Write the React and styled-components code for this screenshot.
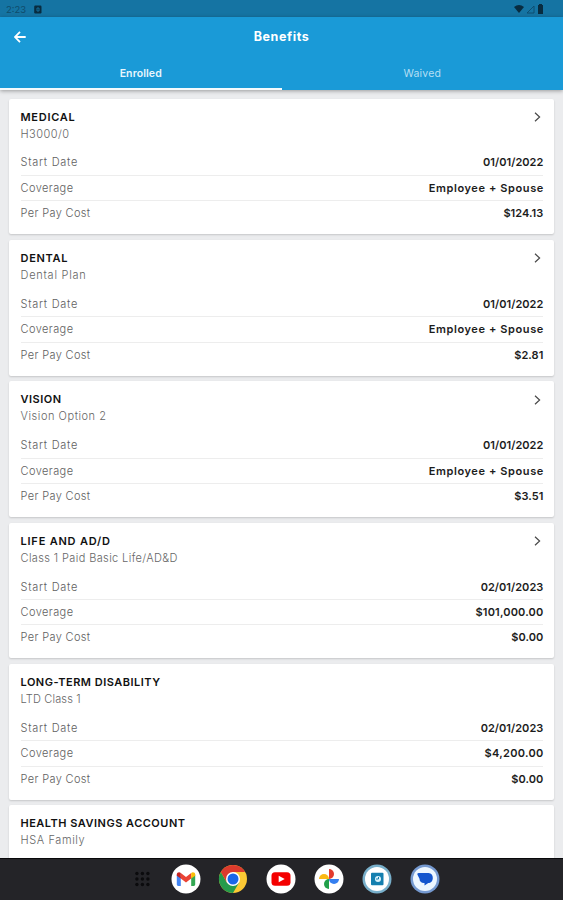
import React from "react";
import styled, { createGlobalStyle } from "styled-components";

const Global = createGlobalStyle`
  * { box-sizing: border-box; }
  body { margin: 0; background: #ebecee; font-family: Inter, "Open Sans", sans-serif; }
`;

const Screen = styled.div`
  height: 900px;
  display: flex;
  flex-direction: column;
  overflow: hidden;
  background: #ebecee;
`;

const StatusBar = styled.div`
  flex: none;
  height: 17px;
  background: #1574a3;
  display: flex;
  align-items: center;
  justify-content: space-between;
  padding: 1px 19px 0 6px;
  color: #0f4c6b;
  font-size: 9.5px;
  line-height: 17px;
`;

const StatusGroup = styled.div`
  display: flex;
  align-items: center;
  gap: ${(p) => p.$gap}px;
`;

const Header = styled.header`
  flex: none;
  height: 73.3px;
  background: #1a9ad7;
  color: #fff;
  box-shadow: 0 1px 4px rgba(0, 0, 0, 0.35);
  position: relative;
`;

const AppBar = styled.div`
  height: 40px;
  display: grid;
  grid-template-columns: 40px 1fr 40px;
  align-items: center;
`;

const BackButton = styled.button`
  border: 0;
  padding: 0;
  background: none;
  display: flex;
  justify-content: center;
`;

const PageTitle = styled.h1`
  margin: 0;
  text-align: center;
  font-size: 12.5px;
  font-weight: 700;
  line-height: 20px;
  letter-spacing: 0.6px;
`;

const Tabs = styled.div`
  height: 33.3px;
  display: grid;
  grid-template-columns: 1fr 1fr;
`;

const Tab = styled.div`
  height: 33.3px;
  text-align: center;
  font-size: 10.5px;
  line-height: 33px;
  letter-spacing: ${(p) => (p.$active ? 0.1 : 0.2)}px;
  font-weight: ${(p) => (p.$active ? 600 : 400)};
  color: ${(p) => (p.$active ? "#e9f6fd" : "#b5dff4")};
  border-bottom: 2px solid ${(p) => (p.$active ? "#f4fafd" : "transparent")};
`;

const List = styled.main`
  flex: 1;
  min-height: 0;
  overflow: hidden;
  padding: 8.3px 8.7px 0 9px;
  display: flex;
  flex-direction: column;
  gap: 5.75px;
`;

const Card = styled.section`
  flex: none;
  height: 135.6px;
  padding: 10px 11px 0 11.5px;
  background: #fff;
  border-radius: 2px;
  box-shadow: 0 1px 2px rgba(0, 0, 0, 0.16);
`;

const CardHead = styled.div`
  height: 41.9px;
  display: flex;
  justify-content: space-between;
`;

const CardTitle = styled.h2`
  margin: 0;
  font-size: 11px;
  line-height: 17px;
  font-weight: 600;
  letter-spacing: ${(p) => p.$track}px;
  color: #111;
`;

const Plan = styled.div`
  font-size: 11px;
  line-height: 17px;
  font-weight: 300;
  letter-spacing: ${(p) => p.$track}px;
  color: #666;
`;

const Row = styled.div`
  height: 25.4px;
  display: flex;
  justify-content: space-between;
  font-size: 11px;
  line-height: 25px;
  border-bottom: 1px solid ${(p) => (p.$last ? "transparent" : "#ededed")};
`;

const Label = styled.span`
  font-weight: 300;
  color: #606060;
  letter-spacing: ${(p) => p.$track}px;
`;

const Value = styled.span`
  font-weight: 600;
  color: #1c1c1c;
  letter-spacing: ${(p) => p.$track}px;
  margin-right: ${(p) => -p.$track}px;
`;

const Chevron = styled.svg`
  width: 7px;
  height: 10px;
  margin: 3.5px 2.2px 0 0;
`;

const Dock = styled.nav`
  flex: none;
  height: 42px;
  background: #242428;
  border-top: 1px solid #08080a;
  display: flex;
  align-items: center;
  padding: 0 0 1px 171px;
  gap: 17.9px;
`;

const DockIcon = styled.svg`
  width: 30px;
  height: 30px;
  flex: none;
`;

const AppGrid = styled(DockIcon)`
  margin: 0 -4.4px 0 -44px;
`;

const benefits = [
  { title: "MEDICAL", tt: 0.72, plan: "H3000/0", pt: 0.45, date: "01/01/2022", coverage: "Employee + Spouse", ct: 0.6, cost: "$124.13", open: true },
  { title: "DENTAL", tt: 0.7, plan: "Dental Plan", pt: 0.75, date: "01/01/2022", coverage: "Employee + Spouse", ct: 0.6, cost: "$2.81", open: true },
  { title: "VISION", tt: 0.5, plan: "Vision Option 2", pt: 0.54, date: "01/01/2022", coverage: "Employee + Spouse", ct: 0.6, cost: "$3.51", open: true },
  { title: "LIFE AND AD/D", tt: 0.8, plan: "Class 1 Paid Basic Life/AD&D", pt: 0.38, date: "02/01/2023", coverage: "$101,000.00", ct: 0.17, cost: "$0.00", open: true },
  { title: "LONG-TERM DISABILITY", tt: 0.5, plan: "LTD Class 1", pt: 0.15, date: "02/01/2023", coverage: "$4,200.00", ct: 0.3, cost: "$0.00" },
  { title: "HEALTH SAVINGS ACCOUNT", tt: 0.5, plan: "HSA Family", pt: 0.6 },
];

function BenefitCard({ item }) {
  return (
    <Card>
      <CardHead>
        <div>
          <CardTitle $track={item.tt}>{item.title}</CardTitle>
          <Plan $track={item.pt}>{item.plan}</Plan>
        </div>
        {item.open && (
          <Chevron viewBox="0 0 7 10">
            <path d="M1 .8 5.6 5 1 9.2" fill="none" stroke="#484848" strokeWidth="1.2" />
          </Chevron>
        )}
      </CardHead>
      {item.date && (
        <>
          <Row><Label $track={0.72}>Start Date</Label><Value $track={0.03}>{item.date}</Value></Row>
          <Row><Label $track={0.42}>Coverage</Label><Value $track={item.ct}>{item.coverage}</Value></Row>
          <Row $last><Label $track={0.35}>Per Pay Cost</Label><Value $track={0.05}>{item.cost}</Value></Row>
        </>
      )}
    </Card>
  );
}

const grid = [9.5, 15, 20.5];

export default function App() {
  return (
    <>
      <Global />
      <Screen>
        <StatusBar>
          <StatusGroup $gap={8}>
            <span>2:23</span>
            <svg width="8" height="9" viewBox="0 0 8 9">
              <rect x=".2" y=".5" width="7.3" height="8" rx="1.2" fill="#082c40" />
              <path d="M3 3h2v3H3z" fill="none" stroke="#1574a3" strokeWidth=".9" />
            </svg>
          </StatusGroup>
          <StatusGroup $gap={2}>
            <svg width="10" height="8" viewBox="0 0 10 8"><path d="M0 2Q5-2 10 2L5 8Z" fill="#082c40" /></svg>
            <svg width="9" height="9" viewBox="0 0 9 9"><path d="M1 8 8 1v7Z" fill="none" stroke="#0d4b6c" strokeWidth=".9" /></svg>
            <svg width="7" height="10" viewBox="0 0 7 10"><path d="M2 1V0h3v1h1v9H1V1Z" fill="#082c40" /></svg>
          </StatusGroup>
        </StatusBar>
        <Header>
          <AppBar>
            <BackButton aria-label="Back">
              <svg width="12" height="12" viewBox="0 0 12 12">
                <path d="M6 .9 .9 6 6 11.1M1.2 6h10.5" fill="none" stroke="#fff" strokeWidth="1.8" />
              </svg>
            </BackButton>
            <PageTitle>Benefits</PageTitle>
          </AppBar>
          <Tabs>
            <Tab $active>Enrolled</Tab>
            <Tab>Waived</Tab>
          </Tabs>
        </Header>
        <List>
          {benefits.map((b) => <BenefitCard key={b.title} item={b} />)}
        </List>
        <Dock>
          <AppGrid viewBox="0 0 30 30">
            {grid.map((y) => grid.map((x) => <circle key={`${x}-${y}`} cx={x + 0.4} cy={y} r="1.7" fill="#0b0b0d" />))}
          </AppGrid>
          <DockIcon viewBox="0 0 30 30">
            <circle cx="15" cy="15" r="14.5" fill="#fff" />
            <path d="M5.8 10.5 9.8 13v9H7.2a1.4 1.4 0 0 1-1.4-1.4Z" fill="#4285f4" />
            <path d="M24.2 10.5 20.2 13v9h2.6a1.4 1.4 0 0 0 1.4-1.4Z" fill="#34a853" />
            <path d="M9.8 9 15 13l5.2-4v5.6L15 18.5l-5.2-3.9Z" fill="#ea4335" />
            <path d="M20.2 9c1.6-1.3 4-.5 4 1.7v1.1l-4 2.8Z" fill="#fbbc04" />
            <path d="M5.8 10.7C5.8 8.5 8.2 7.7 9.8 9v5.6l-4-2.8Z" fill="#c5221f" />
          </DockIcon>
          <DockIcon viewBox="0 0 30 30">
            <circle cx="15" cy="15" r="14" fill="#fcc934" />
            <path d="M2.87 8A14 14 0 0 0 15 29L21.1 18.5 15 15 8.9 18.5Z" fill="#259b4b" />
            <path d="M15 8h12.13A14 14 0 0 0 2.87 8L8.9 18.5Z" fill="#db3a2d" />
            <circle cx="15" cy="15" r="7" fill="#fff" />
            <circle cx="15" cy="15" r="5.5" fill="#1967e8" />
          </DockIcon>
          <DockIcon viewBox="0 0 30 30">
            <circle cx="15" cy="15" r="14.5" fill="#fff" />
            <rect x="5.5" y="8.3" width="19" height="13.4" rx="3.5" fill="#f40000" />
            <path d="m12.7 11.7 6 3.3-6 3.3Z" fill="#fff" />
          </DockIcon>
          <DockIcon viewBox="0 0 30 30">
            <circle cx="15" cy="15" r="14.5" fill="#fff" />
            <path d="M15 15V5a5 5 0 0 1 0 10Z" fill="#e33b2e" />
            <path d="M15 15h10a5 5 0 0 1-10 0Z" fill="#347ff0" />
            <path d="M15 15v10a5 5 0 0 1 0-10Z" fill="#21a04a" />
            <path d="M15 15H5a5 5 0 0 1 10 0Z" fill="#fbb913" />
          </DockIcon>
          <DockIcon viewBox="0 0 30 30">
            <circle cx="15" cy="15" r="14.5" fill="#78afca" />
            <circle cx="15" cy="15" r="12" fill="#fff" />
            <rect x="9" y="8.8" width="12.5" height="12.5" rx="1" fill="#147faf" />
            <circle cx="16" cy="15" r="3" fill="#d9f2fc" />
            <path d="M14 15h2.5v-2" fill="none" stroke="#147faf" strokeWidth="1" />
          </DockIcon>
          <DockIcon viewBox="0 0 30 30">
            <circle cx="15" cy="15" r="14.5" fill="#7599d0" />
            <circle cx="15" cy="15" r="12" fill="#edf6ff" />
            <path d="M13 9h5.5a5 5 0 0 1 4.3 5c0 3-2 5-4.5 5l-3.8 2.5V19H14c-3 0-4.5-1.7-4.5-4.2L7.6 11C7 9.7 7.500 9 8.800 9Z" fill="#1455ce" />
          </DockIcon>
        </Dock>
      </Screen>
    </>
  );
}
